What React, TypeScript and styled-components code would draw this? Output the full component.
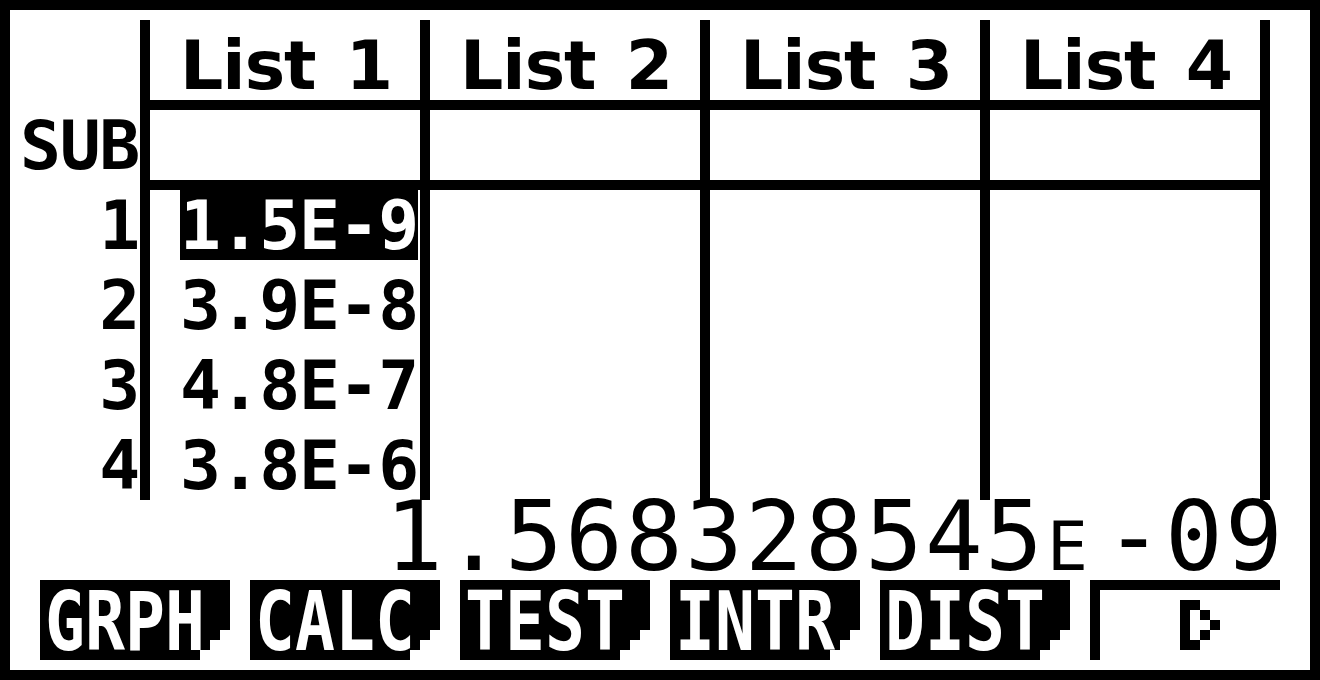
import styled, { createGlobalStyle } from "styled-components";

const MONO = `"DejaVu Sans Mono", "Liberation Mono", monospace`;
const SANS = `"DejaVu Sans", "Liberation Sans", sans-serif`;

const GlobalStyle = createGlobalStyle`
  html, body {
    margin: 0;
    padding: 0;
    background: #fff;
  }
  * {
    box-sizing: border-box;
  }
`;

const lists = [
  { word: "List", num: "1" },
  { word: "List", num: "2" },
  { word: "List", num: "3" },
  { word: "List", num: "4" },
];
const values = ["1.5E-9", "3.9E-8", "4.8E-7", "3.8E-6"];
const menu = ["GRPH", "CALC", "TEST", "INTR", "DIST"];

const MoreIcon = () => (
  <svg width="40" height="50" viewBox="0 0 4 5" shapeRendering="crispEdges">
    <rect x="0" y="0" width="1" height="5" fill="#000" />
    <rect x="1" y="0" width="1" height="1" fill="#000" />
    <rect x="1" y="4" width="1" height="1" fill="#000" />
    <rect x="2" y="1" width="1" height="1" fill="#000" />
    <rect x="2" y="3" width="1" height="1" fill="#000" />
    <rect x="3" y="2" width="1" height="1" fill="#000" />
  </svg>
);

export default function App() {
  return (
    <>
      <GlobalStyle />
      <Frame>
        <Screen>
          <Table>
            <LabelColumn>
              <div />
              <RowLabel>SUB</RowLabel>
              <RowStack>
                {values.map((_, i) => (
                  <RowLabel key={i}>{i + 1}</RowLabel>
                ))}
              </RowStack>
            </LabelColumn>
            <ListGrid>
              {lists.map((l) => (
                <Header key={"h" + l.num}>
                  <span>{l.word}</span>
                  <span>{l.num}</span>
                </Header>
              ))}
              {lists.map((l) => (
                <Cell key={"s" + l.num} />
              ))}
              {lists.map((l, c) => (
                <Cell key={"b" + l.num}>
                  {c === 0 && (
                    <RowStack>
                      {values.map((v, i) => (
                        <ValueRow key={v}>
                          <Value $selected={i === 0}>{v}</Value>
                        </ValueRow>
                      ))}
                    </RowStack>
                  )}
                </Cell>
              ))}
            </ListGrid>
          </Table>
          <Result>
            1.568328545<Exp>e</Exp>-09
          </Result>
          <Menu>
            {menu.map((m) => (
              <Tab key={m}>
                <TabLabel>{m}</TabLabel>
              </Tab>
            ))}
            <MoreTab>
              <MoreIcon />
            </MoreTab>
          </Menu>
        </Screen>
      </Frame>
    </>
  );
}

const Frame = styled.div`
  width: 1320px;
  height: 680px;
  border: 10px solid #000;
  padding: 10px;
  background: #fff;
  overflow: hidden;
`;

const Screen = styled.div`
  width: 1280px;
  height: 640px;
  display: flex;
  flex-direction: column;
  color: #000;
`;

const Table = styled.div`
  display: flex;
  height: 480px;
`;

const LabelColumn = styled.div`
  width: 120px;
  display: grid;
  grid-template-rows: 80px 70px 310px;
  row-gap: 10px;
`;

const RowStack = styled.div`
  display: flex;
  flex-direction: column;
  gap: 10px;
`;

const RowLabel = styled.div`
  height: 70px;
  padding-right: 5px;
  text-align: right;
  font: bold 68px/72px ${MONO};
  letter-spacing: -1.3px;
  white-space: nowrap;
`;

const ListGrid = styled.div`
  width: 1130px;
  display: grid;
  grid-template-columns: repeat(4, 270px);
  grid-template-rows: 80px 70px 310px;
  gap: 10px;
  padding: 0 10px;
  background: #000;
`;

const Cell = styled.div`
  background: #fff;
`;

const Header = styled(Cell)`
  display: flex;
  justify-content: space-between;
  padding: 10px 28px 0 30px;
  font: bold 68px/72px ${SANS};
  letter-spacing: -1px;
  white-space: nowrap;
`;

const ValueRow = styled.div`
  height: 70px;
  padding-left: 30px;
`;

const Value = styled.span<{ $selected?: boolean }>`
  display: inline-block;
  height: 70px;
  font: bold 68px/72px ${MONO};
  letter-spacing: -1.3px;
  white-space: nowrap;
  background: ${({ $selected }) => ($selected ? "#000" : "transparent")};
  color: ${({ $selected }) => ($selected ? "#fff" : "#000")};
`;

const Result = styled.div`
  height: 80px;
  padding-right: 15px;
  text-align: right;
  font: 96px/74px ${MONO};
  letter-spacing: 2.2px;
  white-space: nowrap;
`;

const Exp = styled.span`
  display: inline-block;
  width: 60px;
  padding-left: 2px;
  text-align: left;
  font-size: 68px;
  text-transform: uppercase;
  letter-spacing: 0;
`;

const Menu = styled.div`
  display: flex;
  gap: 20px;
  height: 80px;
  padding-left: 20px;
`;

const Tab = styled.div`
  width: 190px;
  height: 80px;
  padding: 2px 0 0 5px;
  background: #000;
  color: #fff;
  clip-path: polygon(
    0 0,
    190px 0,
    190px 50px,
    180px 50px,
    180px 60px,
    170px 60px,
    170px 70px,
    160px 70px,
    160px 80px,
    0 80px
  );
  font: bold 82px/80px ${MONO};
  white-space: nowrap;
`;

const TabLabel = styled.span`
  display: inline-block;
  transform: scaleX(0.81);
  transform-origin: left center;
`;

const MoreTab = styled.div`
  width: 190px;
  height: 80px;
  border-left: 10px solid #000;
  border-top: 10px solid #000;
  padding: 10px 0 0 80px;
  display: flex;
  align-items: flex-start;
`;
